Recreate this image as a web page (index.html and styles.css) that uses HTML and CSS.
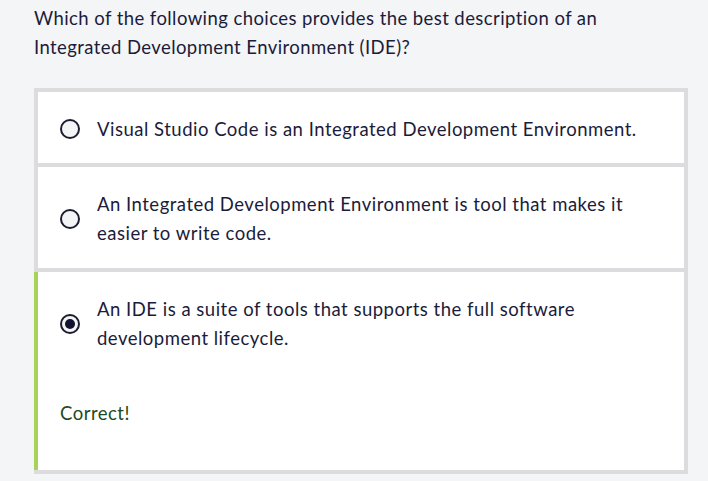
FILE: index.html
```html
<!DOCTYPE html>
<html>
<head>
<meta charset="utf-8">
<link rel="stylesheet" href="styles.css">
</head>
<body>
<div class="page">
  <p class="question">Which of the following choices provides the best description of an Integrated Development Environment (IDE)?</p>
  <div class="choices">
    <div class="choice">
      <div class="row">
        <span class="radio"></span>
        <span class="label">Visual Studio Code is an Integrated Development Environment.</span>
      </div>
    </div>
    <div class="choice">
      <div class="row">
        <span class="radio"></span>
        <span class="label">An Integrated Development Environment is tool that makes it easier to write code.</span>
      </div>
    </div>
    <div class="choice correct">
      <div class="row">
        <span class="radio checked"></span>
        <span class="label">An IDE is a suite of tools that supports the full software development lifecycle.</span>
      </div>
      <div class="feedback">Correct!</div>
    </div>
  </div>
</div>
</body>
</html>
```
FILE: styles.css
```css
html, body {
  margin: 0;
  padding: 0;
  background: #f4f5f7;
}
body {
  font-family: Lato, "Open Sans", sans-serif;
  color: #1b1c3a;
  font-size: 18.5px;
  letter-spacing: 0.5px;
  line-height: 28.8px;
}
.page {
  padding: 4px 20px 0 34px;
}
.question {
  margin: 0 0 26px 0;
  max-width: 600px;
  letter-spacing: 0.42px;
}
.choices {
  border: 4px solid #dcdcde;
  background: #dcdcde;
  display: flex;
  flex-direction: column;
  gap: 4px;
}
.choice {
  background: #ffffff;
  padding: 23px 22px 20px 22px;
}
.choice.correct {
  margin-left: -4px;
  border-left: 4px solid #a8d25a;
}
.row {
  display: flex;
  align-items: center;
  gap: 17px;
}
.radio {
  flex: none;
  width: 16px;
  height: 16px;
  border: 2.5px solid #1b1c2e;
  border-radius: 50%;
  background: #f3f4f6;
  position: relative;
  box-sizing: content-box;
}
.radio.checked::after {
  content: "";
  position: absolute;
  left: 3px;
  top: 3px;
  width: 10px;
  height: 10px;
  border-radius: 50%;
  background: #111131;
}
.feedback {
  margin-top: 46px;
  padding-bottom: 23px;
  color: #1b4a24;
}
```
